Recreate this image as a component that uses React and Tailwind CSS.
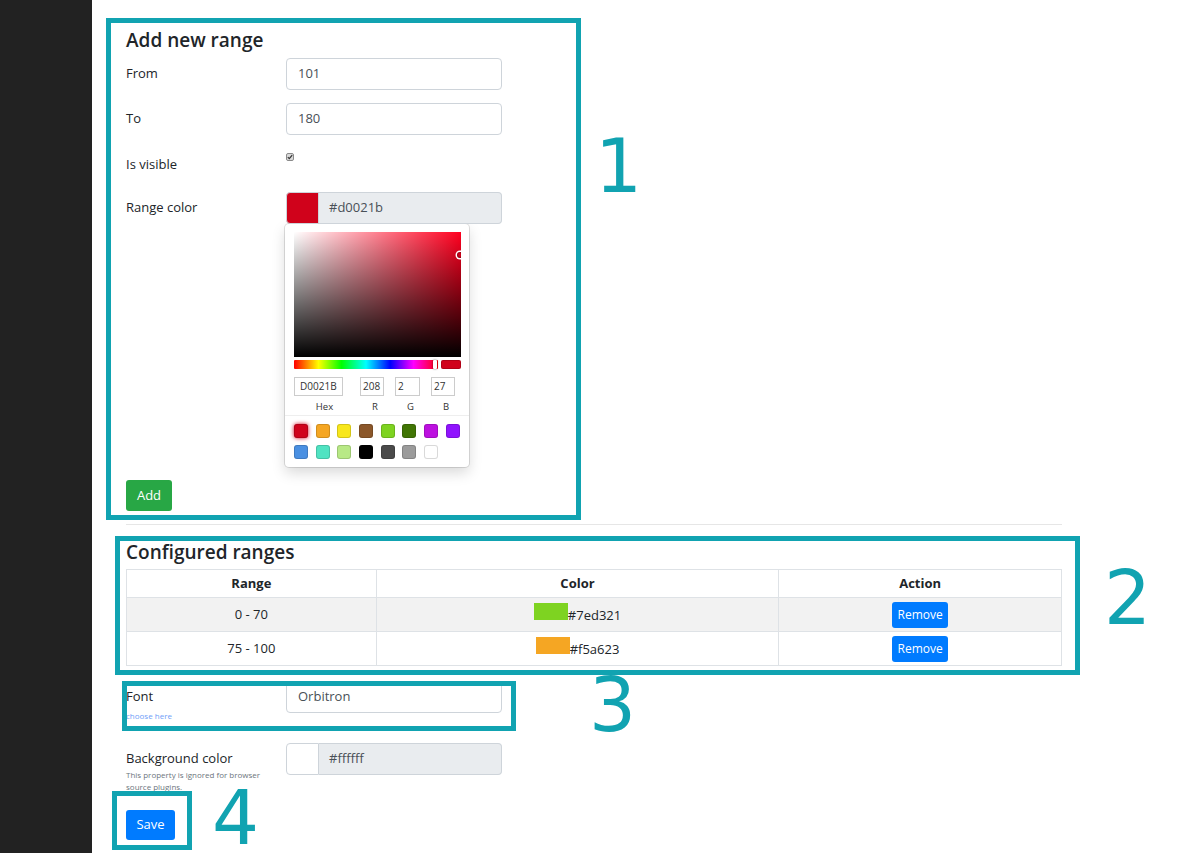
export default function App() {
  const swatches = [
    "#D0021B", "#F5A623", "#F8E71C", "#8B572A", "#7ED321", "#417505", "#BD10E0", "#9013FE",
    "#4A90E2", "#50E3C2", "#B8E986", "#000000", "#4A4A4A", "#9B9B9B", "#FFFFFF",
  ];
  const Label = ({ children, extra = "" }) => (
    <div className={`w-[160px] shrink-0 text-[13px] leading-[21px] pt-[5px] ${extra}`}>{children}</div>
  );
  const TextBox = ({ value }) => (
    <div className="w-[216px] h-[32px] border border-[#ced4da] rounded-[4px] pl-[11px] flex items-center text-[13px] text-[#495057]">
      {value}
    </div>
  );
  const ColorBox = ({ color, value }) => (
    <div className="w-[216px] h-[32px] flex">
      <div className="w-[33px] h-full rounded-l-[4px] border border-[#ced4da]" style={{ background: color }} />
      <div className="flex-1 h-full bg-[#e9ecef] border border-l-0 border-[#ced4da] rounded-r-[4px] pl-[10px] flex items-center text-[13px] text-[#495057]">
        {value}
      </div>
    </div>
  );
  const Field = ({ label, value, w, inputW, pl, tp }) => (
    <div className={`${w} ${pl} shrink-0`}>
      <div className={`${inputW} ${tp} h-[19px] shadow-[inset_0_0_0_1px_#cccccc] text-[10px] leading-[19px] text-[#333]`}>{value}</div>
      <div className="text-center text-[9.5px] leading-[13px] pt-[4px] text-[#333]">{label}</div>
    </div>
  );
  const num = "absolute text-[74px] leading-[66px] text-[#11a3b1] font-['DejaVu_Sans',sans-serif]";

  return (
    <div className="relative w-[1178px] h-[853px] overflow-hidden bg-white flex font-['Open_Sans',sans-serif] text-[#212529]">
      <div className="w-[92px] shrink-0 bg-[#222222]" />
      <main className="flex-1 pl-[34px] pt-[28px]">
        <div className="w-[936px]">
          <h4 className="text-[19px] font-semibold leading-[24px] mb-[6px]">Add new range</h4>

          <div className="flex items-start mb-[13px]">
            <Label>From</Label>
            <TextBox value="101" />
          </div>
          <div className="flex items-start mb-[13px]">
            <Label>To</Label>
            <TextBox value="180" />
          </div>
          <div className="flex items-start mb-[13px] h-[31px]">
            <Label extra="pt-[6px]">Is visible</Label>
            <div className="mt-[5px] w-[8px] h-[8px] rounded-[2px] border border-[#8a8a8a] bg-[#d9d9d9] flex items-center justify-center">
              <svg width="6" height="6" viewBox="0 0 6 6">
                <path d="M0.8 3.2 L2.3 4.7 L5.2 1.2" fill="none" stroke="#333" strokeWidth="1.2" />
              </svg>
            </div>
          </div>
          <div className="flex items-start mb-[13px]">
            <Label>Range color</Label>
            <div>
              <ColorBox color="#d0021b" value="#d0021b" />
              <div className="ml-[-1px] w-[184px] bg-white rounded-[4px] shadow-[0_0_0_1px_rgba(0,0,0,0.12),0_6px_14px_rgba(0,0,0,0.15)] pl-[9px] pr-[8px] pt-[8px] pb-[8px]">
                <div className="relative h-[125px] overflow-hidden bg-[#ff001f]">
                  <div className="absolute inset-0 bg-[linear-gradient(to_right,#ffffff,rgba(255,255,255,0))]" />
                  <div className="absolute inset-0 bg-[linear-gradient(to_top,#000000,rgba(0,0,0,0))]" />
                  <div className="absolute left-[163px] top-[20px] w-[6px] h-[6px] rounded-full shadow-[0_0_0_1.5px_#ffffff,inset_0_0_1px_1px_rgba(0,0,0,0.3)]" />
                </div>
                <div className="flex mt-[3px] gap-[3px]">
                  <div className="relative flex-1 h-[9px] rounded-[1px] bg-[linear-gradient(to_right,#ff0000_0%,#ffff00_17%,#00ff00_33%,#00ffff_50%,#0000ff_67%,#ff00ff_83%,#ff0000_100%)]">
                    <div className="absolute left-[139px] top-0 w-[4px] h-[9px] bg-white rounded-[1px] shadow-[0_0_2px_rgba(0,0,0,0.6)]" />
                  </div>
                  <div className="w-[20px] h-[9px] rounded-[2px] bg-[#d0021b] shadow-[inset_0_0_0_1px_rgba(0,0,0,0.15)]" />
                </div>
                <div className="flex mt-[8px]">
                  <Field label="Hex" value="D0021B" w="w-[61px]" inputW="w-[49px]" pl="" tp="pl-[6px]" />
                  <Field label="R" value="208" w="w-[35px]" inputW="w-[24px]" pl="pl-[5px]" tp="pl-[3px]" />
                  <Field label="G" value="2" w="w-[36px]" inputW="w-[25px]" pl="pl-[5px]" tp="pl-[3px]" />
                  <Field label="B" value="27" w="w-[35px]" inputW="w-[24px]" pl="pl-[5px]" tp="pl-[3px]" />
                </div>
                <div className="mt-[2px] ml-[-9px] mr-[-8px] border-t border-[#eeeeee]" />
                <div className="pt-[8px] flex flex-wrap gap-x-[7.7px] gap-y-[7px]">
                  {swatches.map((c, i) => (
                    <div
                      key={c}
                      className={`w-[14px] h-[14px] rounded-[3px] ${i === 0 ? "shadow-[inset_0_0_0_1px_rgba(0,0,0,0.15),0_0_4px_#d0021b]" : "shadow-[inset_0_0_0_1px_rgba(0,0,0,0.15)]"}`}
                      style={{ background: c }}
                    />
                  ))}
                </div>
              </div>
            </div>
          </div>

          <button className="w-[46px] h-[31px] bg-[#28a745] text-white text-[13px] rounded-[3px] flex items-center justify-center">Add</button>

          <div className="mt-[13px] border-t border-[#e6e6e6]" />

          <h4 className="mt-[15px] text-[19px] font-semibold leading-[24px] mb-[5px]">Configured ranges</h4>
          <table className="w-[936px] border-collapse text-[13px]">
            <colgroup>
              <col className="w-[250px]" />
              <col className="w-[403px]" />
              <col className="w-[283px]" />
            </colgroup>
            <thead>
              <tr className="h-[28px]">
                <th className="border border-[#dee2e6] font-bold text-center p-0">Range</th>
                <th className="border border-[#dee2e6] font-bold text-center p-0">Color</th>
                <th className="border border-[#dee2e6] font-bold text-center p-0">Action</th>
              </tr>
            </thead>
            <tbody>
              {[
                { r: "0 - 70", c: "#7ed321", bg: "bg-[#f2f2f2]" },
                { r: "75 - 100", c: "#f5a623", bg: "bg-white" },
              ].map((row) => (
                <tr key={row.r} className={`h-[34px] ${row.bg}`}>
                  <td className="border border-[#dee2e6] text-center p-0">{row.r}</td>
                  <td className="border border-[#dee2e6] text-center p-0">
                    <span className="inline-block w-[34px] h-[17px] align-baseline" style={{ background: row.c }} />
                    {row.c}
                  </td>
                  <td className="border border-[#dee2e6] text-center p-0">
                    <button className="inline-flex items-center justify-center w-[56px] h-[26px] bg-[#007bff] text-white text-[12px] rounded-[3px] align-middle">Remove</button>
                  </td>
                </tr>
              ))}
            </tbody>
          </table>

          <div className="flex items-start mt-[15px] mb-[22px]">
            <div className="w-[160px] shrink-0">
              <div className="text-[13px] leading-[21px] pt-[5px]">Font</div>
              <div className="mt-[3px] text-[8px] leading-[11px] text-[#6f9ef8]">choose here</div>
            </div>
            <TextBox value="Orbitron" />
          </div>

          <div className="flex items-start mb-[17px]">
            <div className="w-[160px] shrink-0">
              <div className="text-[13px] leading-[21px] pt-[5px]">Background color</div>
              <div className="text-[8px] leading-[12px] text-[#6c757d]">
                This property is ignored for browser
                <br />
                source plugins.
              </div>
            </div>
            <ColorBox color="#ffffff" value="#ffffff" />
          </div>

          <button className="w-[49px] h-[30px] bg-[#007bff] text-white text-[13px] rounded-[3px] flex items-center justify-center">Save</button>
        </div>
      </main>

      {/* annotation overlay */}
      <div className="absolute left-[106px] top-[18px] w-[475px] h-[502px] border-[5px] border-[#11a3b1] pointer-events-none" />
      <div className="absolute left-[115px] top-[536px] w-[965px] h-[139px] border-[5px] border-[#11a3b1] pointer-events-none" />
      <div className="absolute left-[122px] top-[681px] w-[394px] h-[50px] border-[5px] border-[#11a3b1] pointer-events-none" />
      <div className="absolute left-[112px] top-[791px] w-[80px] h-[59px] border-[5px] border-[#11a3b1] pointer-events-none" />
      <div className={`${num} left-[595px] top-[133px]`}>1</div>
      <div className={`${num} left-[1104px] top-[565px]`}>2</div>
      <div className={`${num} left-[589px] top-[672px]`}>3</div>
      <div className={`${num} left-[212px] top-[785px]`}>4</div>
    </div>
  );
}
